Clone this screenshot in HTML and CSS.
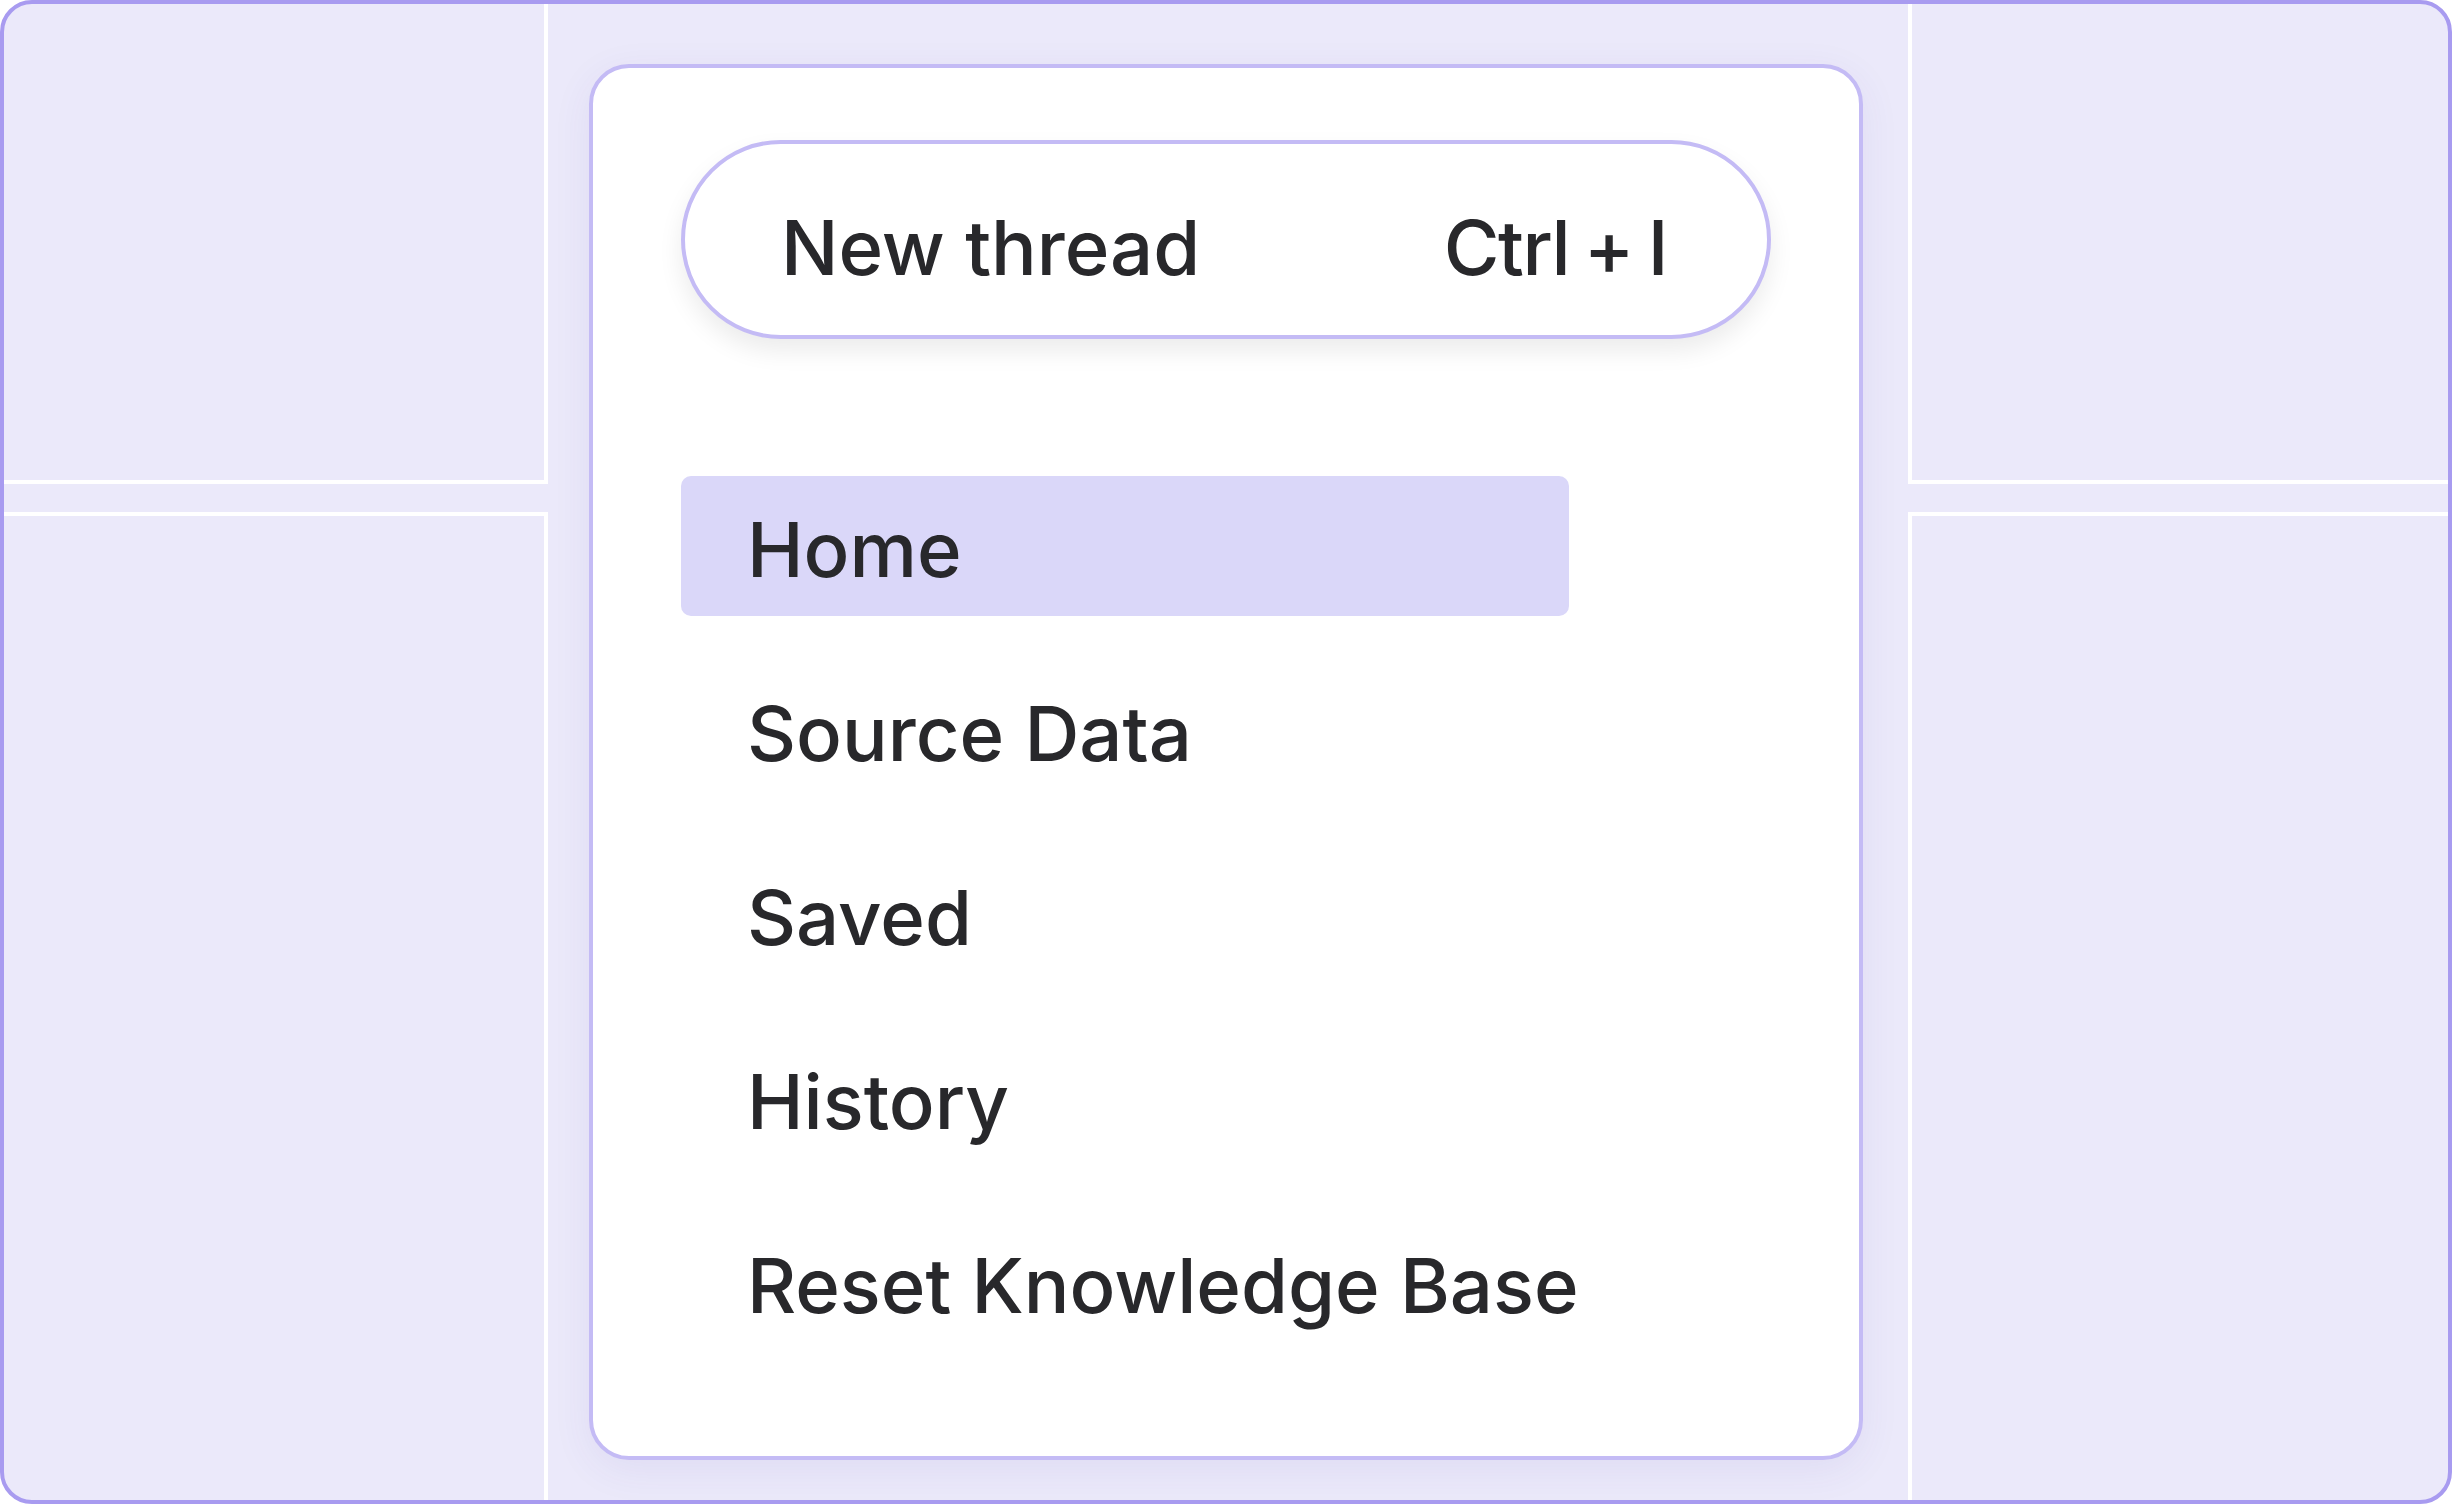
FILE: index.html
```html
<!DOCTYPE html>
<html lang="en">
<head>
<meta charset="utf-8">
<title>Sidebar menu</title>
<link rel="stylesheet" href="styles.css">
</head>
<body>
<div class="frame">
  <div class="side side-left">
    <div class="panel panel-top"></div>
    <div class="panel panel-bottom"></div>
  </div>
  <div class="center">
    <div class="card">
      <button class="new-thread" type="button">
        <span class="nt-label">New thread</span>
        <span class="nt-shortcut">Ctrl + I</span>
      </button>
      <nav class="menu">
        <a class="menu-item active">Home</a>
        <a class="menu-item">Source Data</a>
        <a class="menu-item">Saved</a>
        <a class="menu-item">History</a>
        <a class="menu-item">Reset Knowledge Base</a>
      </nav>
    </div>
  </div>
  <div class="side side-right">
    <div class="panel panel-top"></div>
    <div class="panel panel-bottom"></div>
  </div>
</div>
</body>
</html>
```
FILE: styles.css
```css
* { box-sizing: border-box; }

html, body {
  margin: 0;
  padding: 0;
  background: #ffffff;
}

body {
  font-family: Inter, "Noto Sans", "Liberation Sans", sans-serif;
  color: #28282b;
}

.frame {
  width: 2452px;
  height: 1504px;
  border: 4px solid #a89bf0;
  border-radius: 32px;
  background: #ebe9fa;
  overflow: hidden;
  display: grid;
  grid-template-columns: 544px 1fr 540px;
}

.side {
  display: flex;
  flex-direction: column;
  gap: 28px;
}

.panel {
  border-color: #ffffff;
  border-style: solid;
  border-width: 0;
}

.side-left .panel { border-right-width: 4px; }
.side-right .panel { border-left-width: 4px; }

.panel-top {
  height: 480px;
  border-bottom-width: 4px !important;
}

.panel-bottom {
  flex: 1;
  border-top-width: 4px !important;
}

.center {
  padding: 60px 0 40px 41px;
}

.card {
  width: 1274px;
  height: 1396px;
  background: #ffffff;
  border: 4px solid #c4bbf5;
  border-radius: 40px;
  padding: 72px 88px 0 88px;
  box-shadow: 0 10px 40px rgba(70, 60, 150, 0.07);
}

.new-thread {
  width: 100%;
  height: 199px;
  display: flex;
  align-items: center;
  justify-content: space-between;
  padding: 14px 100px 0 96px;
  background: #ffffff;
  border: 4px solid #c4bbf5;
  border-radius: 100px;
  box-shadow: 0 12px 24px rgba(0, 0, 0, 0.08);
  font-family: inherit;
  font-size: 76px;
  font-weight: 500;
  color: #28282b;
}

.nt-shortcut {
  letter-spacing: -0.02em;
  word-spacing: -4px;
}

.menu {
  margin-top: 137px;
  display: flex;
  flex-direction: column;
  gap: 44px;
}

.menu-item {
  width: 888px;
  height: 140px;
  display: flex;
  align-items: center;
  padding: 6px 0 0 66px;
  border-radius: 10px;
  font-size: 76px;
  font-weight: 500;
  color: #28282b;
  white-space: nowrap;
}

.menu-item.active {
  background: #dad7f9;
}
```
